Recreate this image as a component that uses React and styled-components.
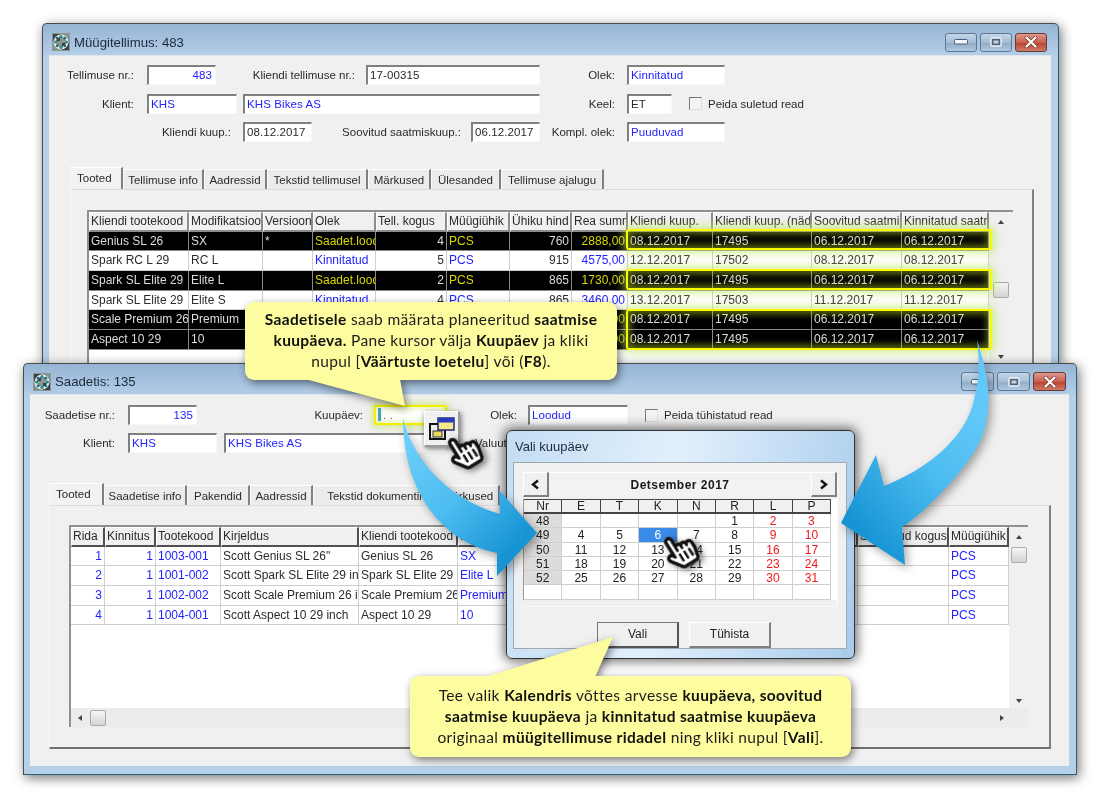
import React from "react";
import styled, { createGlobalStyle, css } from "styled-components";
import { FaHandPointer, FaRegHandPointer } from "react-icons/fa";

const GlobalStyle = createGlobalStyle`
  html, body { margin: 0; padding: 0; background: #fff; }
  body { font-family: "Liberation Sans", Arial, sans-serif; font-size: 12px; color: #222; }
`;

const Stage = styled.div`
  position: relative;
  width: 1099px;
  height: 797px;
  overflow: hidden;
  background: #fff;
  filter: blur(0.35px);
`;

const Window = styled.div`
  position: absolute;
  left: ${(p) => p.$left}px;
  top: ${(p) => p.$top}px;
  width: ${(p) => p.$w}px;
  height: ${(p) => p.$h}px;
  box-sizing: border-box;
  display: flex;
  flex-direction: column;
  padding: 0 7px ${(p) => p.$pb}px 6px;
  border: 1px solid #4a4a4a;
  border-right-color: #2c5f70;
  border-bottom-color: #2c5f70;
  border-radius: 5px 5px 0 0;
  background: linear-gradient(180deg, #96b4d4 0, #b6d0ea 34px, #b6d0ea 100%);
  box-shadow: 2px 3px 12px rgba(0, 0, 0, 0.55);
  overflow: hidden;
`;

const TitleBar = styled.div`
  flex: none;
  box-sizing: border-box;
  height: ${(p) => p.$h}px;
  padding-top: 5px;
  display: flex;
  align-items: center;
  gap: 4px;
  padding-left: 3px;
  font-size: 13.2px;
  color: #1c2a38;
`;

const TitleControls = styled.div`
  margin-left: auto;
  margin-right: ${(p) => p.$mr}px;
  display: flex;
  gap: 3px;
`;

const CtlButton = styled.div`
  width: ${(p) => p.$w}px;
  height: 19px;
  box-sizing: border-box;
  display: flex;
  align-items: center;
  justify-content: center;
  border: 1px solid #5f7890;
  border-radius: 3px;
  background: linear-gradient(180deg, #c4d6e8 0, #a4bdd6 50%, #90abc8 52%, #b0c8e0 100%);
  ${(p) =>
    p.$close &&
    css`
      border-color: #6b3a34;
      background: linear-gradient(180deg, #dd9a8e 0, #c8604e 50%, #b84530 52%, #cf7a68 100%);
    `}
`;

const Body = styled.div`
  flex: 1;
  min-height: 0;
  background: #f0f0f0;
  border-top: 1px solid #dfe6ee;
  display: flex;
  flex-direction: column;
  font-size: 11.5px;
`;

const Form = styled.div`
  display: flex;
  flex-direction: column;
  gap: ${(p) => p.$gap}px;
  padding-top: ${(p) => p.$pt}px;
`;

const FormRow = styled.div`
  display: flex;
  align-items: center;
  height: 20px;
`;

const FieldLabel = styled.div`
  flex: none;
  width: ${(p) => p.$w}px;
  margin-right: ${(p) => p.$mr || 0}px;
  text-align: right;
  white-space: nowrap;
  color: #2a2a2a;
`;

const Input = styled.div`
  flex: none;
  position: relative;
  box-sizing: border-box;
  width: ${(p) => p.$w}px;
  height: 20px;
  margin-left: ${(p) => p.$ml || 0}px;
  padding: 0 3px 1px 2px;
  line-height: 16px;
  background: #fff;
  border-top: 2px solid #808080;
  border-left: 2px solid #808080;
  border-right: 1px solid #f8f8f8;
  border-bottom: 1px solid #f8f8f8;
  color: ${(p) => (p.$blue ? "#2222ff" : "#2a2a2a")};
  text-align: ${(p) => (p.$right ? "right" : "left")};
  white-space: nowrap;
  letter-spacing: 0.1px;
`;

const DateInputGlow = styled(Input)`
  border: 2px solid #f2f000;
  border-radius: 2px;
  box-shadow: 0 0 7px 2px rgba(190, 225, 70, 0.6), inset 0 0 7px 2px rgba(190, 225, 70, 0.35);
  color: #666;
`;

const Caret = styled.span`
  display: inline-block;
  width: 3px;
  height: 13px;
  margin-right: 2px;
  vertical-align: -2px;
  background: #4aa0c0;
`;

const CheckBox = styled.div`
  flex: none;
  box-sizing: border-box;
  width: 13px;
  height: 13px;
  margin-left: ${(p) => p.$ml}px;
  margin-right: 6px;
  background: #f4f4f4;
  border-top: 1px solid #777;
  border-left: 1px solid #777;
  border-right: 1px solid #ddd;
  border-bottom: 1px solid #ddd;
`;

const PlainLabel = styled.div`
  white-space: nowrap;
  margin-left: ${(p) => p.$ml || 0}px;
  color: #2a2a2a;
`;

const TabStrip = styled.div`
  flex: none;
  display: flex;
  align-items: flex-end;
  height: 22px;
  margin-top: ${(p) => p.$mt}px;
  margin-left: ${(p) => p.$ml}px;
`;

const Tab = styled.div`
  flex: none;
  box-sizing: border-box;
  width: ${(p) => p.$w}px;
  height: ${(p) => (p.$active ? 22 : 20)}px;
  line-height: 20px;
  padding-left: ${(p) => (p.$active ? 6 : 0)}px;
  text-align: ${(p) => (p.$active ? "left" : "center")};
  white-space: nowrap;
  overflow: hidden;
  background: ${(p) => (p.$active ? "#f2f2f2" : "#ececec")};
  border-right: 2px solid #808080;
  border-top: 1px solid #fff;
  border-left: 1px solid #fafafa;
  color: #2a2a2a;
`;

const TabPane = styled.div`
  flex: 1;
  min-height: 0;
  margin-left: ${(p) => p.$ml}px;
  margin-right: ${(p) => p.$mr}px;
  margin-bottom: ${(p) => p.$mb}px;
  padding: ${(p) => p.$pad};
  box-sizing: border-box;
  border-top: 1px solid #dcdcdc;
  border-left: 1px solid #fafafa;
  border-right: 2px solid #808080;
  border-bottom: 2px solid #707070;
  display: flex;
  font-size: 12px;
`;

const Table = styled.div`
  position: relative;
  flex: 1;
  min-width: 0;
  display: flex;
  flex-direction: column;
  background: #fff;
  border-top: 2px solid #909090;
  border-left: 2px solid #909090;
`;

const TableMain = styled.div`
  flex: 1;
  min-height: 0;
  display: flex;
`;

const Rows = styled.div`
  flex: 1;
  min-width: 0;
  overflow: hidden;
`;

const GridRow = styled.div`
  display: grid;
  grid-template-columns: ${(p) => p.$cols};
  height: 19.7px;
  background: ${(p) => (p.$black ? "#000" : "#fff")};
  color: ${(p) => (p.$black ? "#dcdcdc" : "#2c2c2c")};
  --accent: ${(p) => (p.$black ? "#d8d800" : "#2222ff")};
  --line: ${(p) => (p.$black ? "#8a8a8a" : "#cfcfcf")};
`;

const Cell = styled.div`
  box-sizing: border-box;
  padding: 0 2px;
  line-height: 19px;
  overflow: hidden;
  white-space: nowrap;
  text-align: ${(p) => (p.$right ? "right" : "left")};
  color: ${(p) => (p.$accent ? "var(--accent)" : "inherit")};
  border-right: 1px solid var(--line);
  border-bottom: 1px solid var(--line);
`;

const HeaderCell = styled.div`
  box-sizing: border-box;
  padding: 0 1px;
  line-height: 17px;
  overflow: hidden;
  white-space: nowrap;
  background: #f0f0f0;
  border-top: 1px solid #fff;
  border-left: 1px solid #fff;
  border-right: 2px solid ${(p) => (p.$strong ? "#505050" : "#8c8c8c")};
  border-bottom: 2px solid ${(p) => (p.$strong ? "#505050" : "#8c8c8c")};
  color: #2a2a2a;
`;

const VScroll = styled.div`
  flex: none;
  width: ${(p) => p.$w}px;
  display: flex;
  flex-direction: column;
  align-items: center;
  background: #f0f0f0;
`;

const ScrollGlyph = styled.div`
  flex: none;
  width: 0;
  height: 0;
  border-left: ${(p) => (p.$dir === "left" ? "0" : "3.5px solid transparent")};
  border-right: ${(p) => (p.$dir === "right" ? "0" : "3.5px solid transparent")};
  ${(p) => p.$dir === "up" && "border-bottom: 4px solid #444; margin-top: 8px;"}
  ${(p) => p.$dir === "down" && "border-top: 4px solid #444; margin-top: auto; margin-bottom: 5px;"}
  ${(p) => p.$dir === "left" && "border-top: 3.5px solid transparent; border-bottom: 3.5px solid transparent; border-right: 4px solid #444; margin-left: 7px;"}
  ${(p) => p.$dir === "right" && "border-top: 3.5px solid transparent; border-bottom: 3.5px solid transparent; border-left: 4px solid #444; margin-left: auto; margin-right: 24px;"}
`;

const ScrollThumb = styled.div`
  flex: none;
  box-sizing: border-box;
  width: 16px;
  height: 16px;
  margin-top: ${(p) => p.$mt || 0}px;
  margin-left: ${(p) => p.$ml || 0}px;
  border: 1px solid #aaa;
  border-radius: 2px;
  background: linear-gradient(180deg, #f6f6f6, #d4d4d4);
`;

const HScroll = styled.div`
  flex: none;
  height: 19px;
  display: flex;
  align-items: center;
  background: #ececec;
`;

const HighlightBox = styled.div`
  position: absolute;
  left: 537px;
  width: 366px;
  top: ${(p) => p.$top}px;
  height: ${(p) => p.$h}px;
  box-sizing: border-box;
  border: 2px solid #fbfb00;
  border-radius: 3px;
  box-shadow: 0 0 8px 3px rgba(190, 230, 90, 0.65), inset 0 0 7px 3px rgba(190, 220, 40, 0.5);
`;

const Dialog = styled.div`
  position: absolute;
  left: 506px;
  top: 430px;
  width: 349px;
  height: 229px;
  box-sizing: border-box;
  padding: 0 7px 10px 6px;
  display: flex;
  flex-direction: column;
  border: 1px solid #333;
  border-radius: 6px;
  background: linear-gradient(100deg, #c3ddf4 0, #e2f0fc 45%, #c8e0f6 70%, #a8cbea 100%);
  box-shadow: 0 0 12px 2px rgba(0, 0, 0, 0.6);
`;

const DialogTitle = styled.div`
  flex: none;
  height: 31px;
  line-height: 31px;
  padding-left: 2px;
  font-size: 13px;
  color: #1c2a38;
`;

const DialogBody = styled.div`
  flex: 1;
  background: #f0f0f0;
  border: 1px solid #a0a8b0;
  padding: 9px 8px 0 9px;
  display: flex;
  flex-direction: column;
`;

const CalendarFrame = styled.div`
  border-right: 1px solid #fafafa;
  border-bottom: 1px solid #fafafa;
  height: 134px;
`;

const CalendarNav = styled.div`
  display: flex;
  height: 25px;
  background: #f2f2f2;
`;

const NavButton = styled.div`
  flex: none;
  box-sizing: border-box;
  width: 26px;
  display: flex;
  align-items: center;
  justify-content: center;
  background: #f0f0f0;
  border-top: 1px solid #fff;
  border-left: 1px solid #fff;
  border-right: 2px solid #808080;
  border-bottom: 2px solid #808080;
`;

const NavTitle = styled.div`
  flex: 1;
  text-align: center;
  line-height: 25px;
  font-weight: bold;
  letter-spacing: 0.5px;
  color: #1a1a1a;
  border-top: 1px solid #fff;
`;

const CalendarGrid = styled.div`
  display: grid;
  grid-template-columns: repeat(8, 38.4px);
  grid-template-rows: 15px repeat(6, 14.3px);
  margin-top: 2px;
  border-left: 1px solid #999;
  background: #fff;
`;

const CalHead = styled.div`
  box-sizing: border-box;
  line-height: 13px;
  text-align: center;
  background: #f0f0f0;
  border-top: 1px solid #444;
  border-right: 1px solid #444;
  border-bottom: 2px solid #444;
  color: #222;
`;

const CalCell = styled.div`
  box-sizing: border-box;
  line-height: 14px;
  text-align: center;
  border-right: 1px solid #cfcfcf;
  border-bottom: 1px solid #cfcfcf;
  color: ${(p) => (p.$selected ? "#fff" : p.$red ? "#f01818" : "#222")};
  background: ${(p) => (p.$selected ? "#3a8ae8" : p.$week ? "#dcdcdc" : "#fff")};
`;

const DialogButtons = styled.div`
  display: flex;
  justify-content: center;
  gap: 10px;
  margin-top: 15px;
  padding-left: 7px;
`;

const PushButton = styled.div`
  width: 82px;
  height: 26px;
  box-sizing: border-box;
  text-align: center;
  line-height: 22px;
  background: #f0f0f0;
  color: #222;
  border-top: 1px solid ${(p) => (p.$default ? "#777" : "#fff")};
  border-left: 1px solid ${(p) => (p.$default ? "#777" : "#fff")};
  border-right: 2px solid ${(p) => (p.$default ? "#555" : "#808080")};
  border-bottom: 2px solid ${(p) => (p.$default ? "#555" : "#808080")};
`;

const ArrowLayer = styled.svg`
  position: absolute;
  left: 0;
  top: 0;
  filter: drop-shadow(3px 4px 5px rgba(0, 0, 0, 0.35));
  pointer-events: none;
`;

const LookupButton = styled.div`
  position: absolute;
  left: 424px;
  top: 411px;
  width: 36px;
  height: 36px;
  box-sizing: border-box;
  display: flex;
  align-items: center;
  justify-content: center;
  background: #f0f0f0;
  border-top: 1px solid #fff;
  border-left: 1px solid #fff;
  border-right: 2px solid #999;
  border-bottom: 2px solid #999;
  box-shadow: 1px 2px 6px rgba(0, 0, 0, 0.55);
`;

const HandWrap = styled.div`
  position: absolute;
  left: ${(p) => p.$left}px;
  top: ${(p) => p.$top}px;
  width: 32px;
  height: 41px;
  transform: rotate(-32deg);
  filter: drop-shadow(2px 3px 3px rgba(0, 0, 0, 0.5));
  svg {
    position: absolute;
    left: 0;
    top: 0;
    width: 32px;
    height: 41px;
  }
`;

const Callout = styled.div`
  position: absolute;
  left: ${(p) => p.$left}px;
  top: ${(p) => p.$top}px;
  width: ${(p) => p.$w}px;
  height: ${(p) => p.$h}px;
  box-sizing: border-box;
  display: flex;
  align-items: center;
  justify-content: center;
  padding: 0 6px 1px;
  text-align: center;
  font-family: "Lato", "Open Sans", sans-serif;
  font-size: 15.5px;
  letter-spacing: 0.35px;
  line-height: 21px;
  color: #1c1c1c;
  background: #fdfc9e;
  border-radius: 9px;
  b { font-weight: 700; color: #111; }
`;

const CalloutShadow = styled.div`
  filter: drop-shadow(2px 3px 4px rgba(0, 0, 0, 0.5));
`;

const CalloutTail = styled.svg`
  position: absolute;
  left: 0;
  top: 0;
  pointer-events: none;
`;

const Hand = ({ left, top }) => (
  <HandWrap $left={left} $top={top}>
    <FaHandPointer color="#fff" />
    <FaRegHandPointer color="#111" />
  </HandWrap>
);

const AppIcon = () => (
  <svg width="18" height="18" viewBox="0 0 18 18">
    <rect width="18" height="18" fill="#8a9490" />
    <rect x="1" y="1" width="7" height="7" fill="#3b4444" />
    <rect x="10" y="10" width="7" height="7" fill="#3b4444" />
    <circle cx="9" cy="9" r="6.2" fill="none" stroke="#e8ecec" strokeWidth="2.4" />
    <circle cx="9" cy="3.6" r="1.6" fill="#2a8f90" />
    <circle cx="9" cy="14.4" r="1.6" fill="#2a8f90" />
    <circle cx="3.6" cy="9" r="1.6" fill="#2a8f90" />
    <circle cx="14.4" cy="9" r="1.6" fill="#2a8f90" />
    <circle cx="5.2" cy="5.2" r="1.4" fill="#1f6c78" />
    <circle cx="12.8" cy="12.8" r="1.4" fill="#1f6c78" />
    <circle cx="12.8" cy="5.2" r="1.4" fill="#1f6c78" />
    <circle cx="5.2" cy="12.8" r="1.4" fill="#1f6c78" />
  </svg>
);

const WindowControls = ({ mr, w }) => (
  <TitleControls $mr={mr}>
    <CtlButton $w={w}>
      <svg width="14" height="6" viewBox="0 0 14 6">
        <rect x="0.5" y="0.5" width="13" height="4.5" rx="1" fill="#f4f8fc" stroke="#4b6076" />
      </svg>
    </CtlButton>
    <CtlButton $w={w}>
      <svg width="12" height="10" viewBox="0 0 12 10">
        <rect x="1" y="1" width="10" height="8" rx="1" fill="#50657c" stroke="#f4f8fc" strokeWidth="1.4" />
        <rect x="3.5" y="3.5" width="5" height="3" fill="#c0d2e4" />
      </svg>
    </CtlButton>
    <CtlButton $w={w} $close>
      <svg width="14" height="12" viewBox="0 0 14 12">
        <path d="M2.5 1.5 L11.5 10.5 M11.5 1.5 L2.5 10.5" stroke="#7a2c20" strokeWidth="3.6" strokeLinecap="round" />
        <path d="M2.5 1.5 L11.5 10.5 M11.5 1.5 L2.5 10.5" stroke="#fff" strokeWidth="2.3" strokeLinecap="round" />
      </svg>
    </CtlButton>
  </TitleControls>
);

const orderCols = "100px 74px 50px 63px 71px 63px 62px 56px 85px 99px 90px 87px";
const orderHead = [
  "Kliendi tootekood",
  "Modifikatsioon",
  "Versioon",
  "Olek",
  "Tell. kogus",
  "Müügiühik",
  "Ühiku hind",
  "Rea summa",
  "Kliendi kuup.",
  "Kliendi kuup. (nädal)",
  "Soovitud saatmiskuup.",
  "Kinnitatud saatmiskuup.",
];
const orderRows = [
  ["Genius SL 26", "SX", "*", "Saadet.loodud", "4", "760", "2888,00", "08.12.2017", "17495", "06.12.2017", "06.12.2017", true],
  ["Spark RC L 29", "RC L", "", "Kinnitatud", "5", "915", "4575,00", "12.12.2017", "17502", "08.12.2017", "08.12.2017", false],
  ["Spark SL Elite 29", "Elite L", "", "Saadet.loodud", "2", "865", "1730,00", "08.12.2017", "17495", "06.12.2017", "06.12.2017", true],
  ["Spark SL Elite 29", "Elite S", "", "Kinnitatud", "4", "865", "3460,00", "13.12.2017", "17503", "11.12.2017", "11.12.2017", false],
  ["Scale Premium 26", "Premium", "", "Saadet.loodud", "1", "1290", "1290,00", "08.12.2017", "17495", "06.12.2017", "06.12.2017", true],
  ["Aspect 10 29", "10", "", "Saadet.loodud", "1", "780", "780,00", "08.12.2017", "17495", "06.12.2017", "06.12.2017", true],
];

const shipCols = "34px 51px 65px 138px 99px 82px 318px 91px 60px";
const shipHead = ["Rida", "Kinnitus", "Tootekood", "Kirjeldus", "Kliendi tootekood", "Modifikatsioon", "Kogus", "Saadetud kogus", "Müügiühik"];
const shipRows = [
  ["1", "1", "1003-001", 'Scott Genius SL 26"', "Genius SL 26", "SX"],
  ["2", "1", "1001-002", "Scott Spark SL Elite 29 inch", "Spark SL Elite 29", "Elite L"],
  ["3", "1", "1002-002", "Scott Scale Premium 26 inch", "Scale Premium 26", "Premium"],
  ["4", "1", "1004-001", "Scott Aspect 10 29 inch", "Aspect 10 29", "10"],
];

const calendarWeeks = [
  ["48", "", "", "", "", "1", "2", "3"],
  ["49", "4", "5", "6", "7", "8", "9", "10"],
  ["50", "11", "12", "13", "14", "15", "16", "17"],
  ["51", "18", "19", "20", "21", "22", "23", "24"],
  ["52", "25", "26", "27", "28", "29", "30", "31"],
  ["", "", "", "", "", "", "", ""],
];

const OrderWindow = () => (
  <Window $left={42} $top={23} $w={1017} $h={341} $pb={0}>
    <TitleBar $h={31}>
      <AppIcon />
      Müügitellimus: 483
      <WindowControls mr={4} w={32} />
    </TitleBar>
    <Body>
      <Form $gap={8.5} $pt={9}>
        <FormRow>
          <FieldLabel $w={85} $mr={13}>Tellimuse nr.:</FieldLabel>
          <Input $w={69} $blue $right>483</Input>
          <FieldLabel $w={139} $mr={11}>Kliendi tellimuse nr.:</FieldLabel>
          <Input $w={174}>17-00315</Input>
          <FieldLabel $w={75} $mr={12}>Olek:</FieldLabel>
          <Input $w={98} $blue>Kinnitatud</Input>
        </FormRow>
        <FormRow>
          <FieldLabel $w={85} $mr={13}>Klient:</FieldLabel>
          <Input $w={90} $blue>KHS</Input>
          <Input $w={297} $ml={6} $blue>KHS Bikes AS</Input>
          <FieldLabel $w={75} $mr={12}>Keel:</FieldLabel>
          <Input $w={45}>ET</Input>
          <CheckBox $ml={17} />
          <PlainLabel>Peida suletud read</PlainLabel>
        </FormRow>
        <FormRow>
          <FieldLabel $w={182} $mr={12}>Kliendi kuup.:</FieldLabel>
          <Input $w={69}>08.12.2017</Input>
          <FieldLabel $w={149} $mr={10}>Soovitud saatmiskuup.:</FieldLabel>
          <Input $w={69}>06.12.2017</Input>
          <FieldLabel $w={75} $mr={12}>Kompl. olek:</FieldLabel>
          <Input $w={98} $blue>Puuduvad</Input>
        </FormRow>
      </Form>
      <TabStrip $mt={25} $ml={21}>
        <Tab $active $w={53}>Tooted</Tab>
        <Tab $w={81}>Tellimuse info</Tab>
        <Tab $w={63}>Aadressid</Tab>
        <Tab $w={101}>Tekstid tellimusel</Tab>
        <Tab $w={63}>Märkused</Tab>
        <Tab $w={70}>Ülesanded</Tab>
        <Tab $w={103}>Tellimuse ajalugu</Tab>
      </TabStrip>
      <TabPane $ml={21} $mr={17} $mb={-3} $pad="20px 19px 0 16px">
        <Table>
          <TableMain>
            <Rows>
              <GridRow $cols={orderCols}>
                {orderHead.map((h) => (
                  <HeaderCell key={h}>{h}</HeaderCell>
                ))}
              </GridRow>
              {orderRows.map((r, i) => (
                <GridRow key={i} $cols={orderCols} $black={r[11]}>
                  <Cell>{r[0]}</Cell>
                  <Cell>{r[1]}</Cell>
                  <Cell>{r[2]}</Cell>
                  <Cell $accent>{r[3]}</Cell>
                  <Cell $right>{r[4]}</Cell>
                  <Cell $accent>PCS</Cell>
                  <Cell $right>{r[5]}</Cell>
                  <Cell $right $accent>{r[6]}</Cell>
                  <Cell>{r[7]}</Cell>
                  <Cell>{r[8]}</Cell>
                  <Cell>{r[9]}</Cell>
                  <Cell>{r[10]}</Cell>
                </GridRow>
              ))}
            </Rows>
            <VScroll $w={24}>
              <ScrollGlyph $dir="up" />
              <ScrollThumb $mt={58} />
              <ScrollGlyph $dir="down" />
            </VScroll>
          </TableMain>
          <HighlightBox $top={17} $h={21} />
          <HighlightBox $top={57} $h={21} />
          <HighlightBox $top={97} $h={41} />
        </Table>
      </TabPane>
    </Body>
  </Window>
);

const ShipmentWindow = () => (
  <Window $left={23} $top={363} $w={1054} $h={412} $pb={8}>
    <TitleBar $h={30}>
      <AppIcon />
      Saadetis: 135
      <WindowControls mr={3} w={33} />
    </TitleBar>
    <Body>
      <Form $gap={8} $pt={10}>
        <FormRow>
          <FieldLabel $w={85} $mr={13}>Saadetise nr.:</FieldLabel>
          <Input $w={69} $blue $right>135</Input>
          <FieldLabel $w={166} $mr={11}>Kuupäev:</FieldLabel>
          <DateInputGlow $w={73}><Caret />. .</DateInputGlow>
          <FieldLabel $w={70} $mr={11}>Olek:</FieldLabel>
          <Input $w={100} $blue>Loodud</Input>
          <CheckBox $ml={17} />
          <PlainLabel>Peida tühistatud read</PlainLabel>
        </FormRow>
        <FormRow>
          <FieldLabel $w={85} $mr={13}>Klient:</FieldLabel>
          <Input $w={89} $blue>KHS</Input>
          <Input $w={222} $ml={7} $blue>KHS Bikes AS</Input>
          <PlainLabel $ml={29}>Valuuta:</PlainLabel>
        </FormRow>
      </Form>
      <TabStrip $mt={30} $ml={19}>
        <Tab $active $w={55}>Tooted</Tab>
        <Tab $w={83}>Saadetise info</Tab>
        <Tab $w={63}>Pakendid</Tab>
        <Tab $w={63}>Aadressid</Tab>
        <Tab $w={124}>Tekstid dokumentil</Tab>
        <Tab $w={63}>Märkused</Tab>
      </TabStrip>
      <TabPane $ml={19} $mr={18} $mb={17} $pad="19px 21px 20px 19px">
        <Table>
          <TableMain>
            <Rows>
              <GridRow $cols={shipCols}>
                {shipHead.map((h) => (
                  <HeaderCell key={h} $strong>{h}</HeaderCell>
                ))}
              </GridRow>
              {shipRows.map((r) => (
                <GridRow key={r[0]} $cols={shipCols}>
                  <Cell $right $accent>{r[0]}</Cell>
                  <Cell $right $accent>{r[1]}</Cell>
                  <Cell $accent>{r[2]}</Cell>
                  <Cell>{r[3]}</Cell>
                  <Cell>{r[4]}</Cell>
                  <Cell $accent>{r[5]}</Cell>
                  <Cell />
                  <Cell />
                  <Cell $accent>PCS</Cell>
                </GridRow>
              ))}
            </Rows>
            <VScroll $w={19}>
              <ScrollGlyph $dir="up" />
              <ScrollThumb $mt={8} />
              <ScrollGlyph $dir="down" />
            </VScroll>
          </TableMain>
          <HScroll>
            <ScrollGlyph $dir="left" />
            <ScrollThumb $ml={8} />
            <ScrollGlyph $dir="right" />
          </HScroll>
        </Table>
      </TabPane>
    </Body>
  </Window>
);

const NavChevron = ({ flip }) => (
  <svg width="9" height="11" viewBox="0 0 9 11">
    <path d={flip ? "M2 1.5 L7 5.5 L2 9.5" : "M7 1.5 L2 5.5 L7 9.5"} fill="none" stroke="#111" strokeWidth="2.4" />
  </svg>
);

const DatePicker = () => (
  <Dialog>
    <DialogTitle>Vali kuupäev</DialogTitle>
    <DialogBody>
      <CalendarFrame>
        <CalendarNav>
          <NavButton><NavChevron /></NavButton>
          <NavTitle>Detsember 2017</NavTitle>
          <NavButton><NavChevron flip /></NavButton>
        </CalendarNav>
        <CalendarGrid>
          {["Nr", "E", "T", "K", "N", "R", "L", "P"].map((d) => (
            <CalHead key={d}>{d}</CalHead>
          ))}
          {calendarWeeks.map((week, w) =>
            week.map((d, i) => (
              <CalCell key={`${w}-${i}`} $week={i === 0 && d} $red={i > 5} $selected={d === "6"}>
                {d}
              </CalCell>
            ))
          )}
        </CalendarGrid>
      </CalendarFrame>
      <DialogButtons>
        <PushButton $default>Vali</PushButton>
        <PushButton>Tühista</PushButton>
      </DialogButtons>
    </DialogBody>
  </Dialog>
);

const Arrows = () => (
  <ArrowLayer width="1099" height="797" viewBox="0 0 1099 797">
    <defs>
      <linearGradient id="arrowLeft" gradientUnits="userSpaceOnUse" x1="410" y1="440" x2="520" y2="540">
        <stop offset="0" stopColor="#6ccdf9" />
        <stop offset="0.5" stopColor="#4cbcf0" />
        <stop offset="1" stopColor="#1794d4" />
      </linearGradient>
      <linearGradient id="arrowRight" gradientUnits="userSpaceOnUse" x1="985" y1="420" x2="860" y2="530">
        <stop offset="0" stopColor="#62c8f8" />
        <stop offset="0.45" stopColor="#4cbcf0" />
        <stop offset="1" stopColor="#1794d4" />
      </linearGradient>
    </defs>
    <path
      fill="url(#arrowLeft)"
      d="M403 418 C410 450 440 497 500 514 L499 490 L537 533 L497 576 L497 553 C445 543 403 495 403 418 Z"
    />
    <path
      fill="url(#arrowRight)"
      d="M977 340 C992 385 995 425 970 458 C955 480 925 512 902 527 L905 565 L841 523 L876 455 L884 486 C925 470 965 440 974 400 C979 380 980 360 977 340 Z"
    />
  </ArrowLayer>
);

const LookupIcon = () => (
  <svg width="28" height="26" viewBox="0 0 28 26">
    <rect x="2" y="8" width="15" height="15" fill="#eee" stroke="#111" strokeWidth="2" />
    <rect x="5" y="15" width="9" height="6" fill="#e8d860" stroke="#333" />
    <rect x="10" y="2" width="16" height="12" fill="#f6e88a" stroke="#1a1a70" strokeWidth="1.4" />
    <rect x="10" y="2" width="16" height="4.5" fill="#2a3ac0" />
  </svg>
);

const App = () => (
  <Stage>
    <GlobalStyle />
    <OrderWindow />
    <ShipmentWindow />
    <DatePicker />
    <Arrows />
    <LookupButton>
      <LookupIcon />
    </LookupButton>
    <Hand left={448} top={431} />
    <Hand left={664} top={530} />
    <CalloutShadow>
      <Callout $left={245} $top={302} $w={372} $h={78}>
        <div>
          <b>Saadetisele</b> saab määrata planeeritud <b>saatmise</b>
          <br />
          <b>kuupäeva.</b> Pane kursor välja <b>Kuupäev</b> ja kliki
          <br />
          nupul [<b>Väärtuste loetelu</b>] või (<b>F8</b>).
        </div>
      </Callout>
      <CalloutTail width="1099" height="797" viewBox="0 0 1099 797">
        <polygon points="305,379 400,379 405,406" fill="#fdfc9e" />
      </CalloutTail>
    </CalloutShadow>
    <CalloutShadow>
      <Callout $left={410} $top={676} $w={441} $h={81}>
        <div>
          Tee valik <b>Kalendris</b> võttes arvesse <b>kuupäeva, soovitud</b>
          <br />
          <b>saatmise kuupäeva</b> ja <b>kinnitatud saatmise kuupäeva</b>
          <br />
          originaal <b>müügitellimuse ridadel</b> ning kliki nupul [<b>Vali</b>].
        </div>
      </Callout>
      <CalloutTail width="1099" height="797" viewBox="0 0 1099 797">
        <polygon points="485,677 595,677 613,637" fill="#fdfc9e" />
      </CalloutTail>
    </CalloutShadow>
  </Stage>
);

export default App;
